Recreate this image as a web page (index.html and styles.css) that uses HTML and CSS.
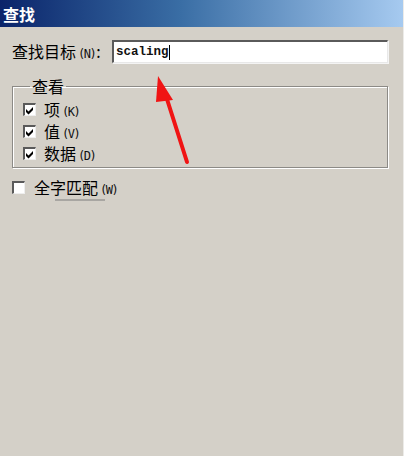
FILE: index.html
```html
<!DOCTYPE html>
<html lang="zh">
<head>
<meta charset="utf-8">
<link rel="stylesheet" href="styles.css">
</head>
<body>
<div class="window">
  <div class="titlebar"><span class="title">查找</span></div>
  <div class="content">
    <div class="find-row">
      <label class="label">查找目标<span class="key">(N)</span>:</label>
      <div class="input"><span class="value">scaling</span><span class="caret"></span></div>
    </div>
    <fieldset class="group">
      <legend class="legend">查看</legend>
      <div class="check-row"><span class="box"><svg class="tick" viewBox="0 0 8 8" width="8" height="8"><path d="M0 3 L2.5 5.5 L7 1 L7 4 L2.5 8.5 L0 6 Z" fill="#000"/></svg></span><span class="text">项<span class="key">(K)</span></span></div>
      <div class="check-row"><span class="box"><svg class="tick" viewBox="0 0 8 8" width="8" height="8"><path d="M0 3 L2.5 5.5 L7 1 L7 4 L2.5 8.5 L0 6 Z" fill="#000"/></svg></span><span class="text">值<span class="key">(V)</span></span></div>
      <div class="check-row"><span class="box"><svg class="tick" viewBox="0 0 8 8" width="8" height="8"><path d="M0 3 L2.5 5.5 L7 1 L7 4 L2.5 8.5 L0 6 Z" fill="#000"/></svg></span><span class="text">数据<span class="key">(D)</span></span></div>
    </fieldset>
    <div class="check-row whole"><span class="box"></span><span class="text focus">全字匹配<span class="key">(W)</span></span></div>
  </div>
  <svg class="arrow" width="404" height="456" viewBox="0 0 404 456">
    <line x1="187" y1="162" x2="166" y2="96" stroke="#f01414" stroke-width="4" stroke-linecap="round"/>
    <polygon points="158,76 173,100 156,102" fill="#f01414"/>
  </svg>
</div>
</body>
</html>
```
FILE: styles.css
```css
html, body {
  margin: 0;
  padding: 0;
}
body {
  background: #d4d0c8;
  font-family: "Noto Sans CJK SC", "Noto Sans", sans-serif;
  color: #000;
}
.window {
  position: relative;
  width: 404px;
  height: 456px;
  overflow: hidden;
  background: #d4d0c8;
  box-sizing: border-box;
  border-right: 1px solid #ecebe8;
}
.titlebar {
  height: 27px;
  display: flex;
  align-items: center;
  padding-left: 3px;
  background: linear-gradient(to right, #0a246a 0%, #3a6ea5 45%, #a6caf0 100%);
}
.title {
  color: #fff;
  font-weight: bold;
  font-size: 16px;
  line-height: 1;
}
.content {
  padding: 13px 15px 0 12px;
}
.find-row {
  display: flex;
  align-items: center;
  height: 23px;
}
.label {
  width: 100px;
  font-size: 16px;
  line-height: 1;
  color: #000;
  white-space: nowrap;
}
.key {
  font-family: "DejaVu Sans Mono", "Liberation Mono", monospace;
  font-size: 12px;
  letter-spacing: -1.5px;
  margin-left: 2px;
  margin-right: 1px;
  color: #111;
}
.input {
  flex: 1;
  height: 23px;
  box-sizing: border-box;
  background: #fff;
  border-top: 2px solid #5a5a5a;
  border-left: 2px solid #5a5a5a;
  border-right: 1px solid #e8e8e8;
  border-bottom: 1px solid #e8e8e8;
  box-shadow: 1px 1px 0 #f4f4f4;
  display: flex;
  align-items: center;
  padding-left: 2px;
}
.value {
  font-family: "Liberation Mono", "DejaVu Sans Mono", monospace;
  font-size: 12.5px;
  font-weight: bold;
  color: #111;
}
.caret {
  width: 1px;
  height: 15px;
  background: #000;
}
.group {
  margin: 15px 0 0 0;
  padding: 4px 0 4px 10px;
  border: 1px solid #8c8a86;
  box-shadow: 1px 1px 0 #fff, inset 1px 1px 0 #fff;
  height: 90px;
  box-sizing: border-box;
  min-width: 0;
}
.legend {
  padding: 0 2px;
  margin-left: 7px;
  font-size: 16px;
  line-height: 16px;
  color: #000;
}
.check-row {
  display: flex;
  align-items: center;
  height: 22px;
  gap: 8px;
}
.box {
  width: 13px;
  height: 13px;
  box-sizing: border-box;
  background: #fff;
  border-top: 2px solid #5a5a5a;
  border-left: 2px solid #5a5a5a;
  border-right: 1px solid #eee;
  border-bottom: 1px solid #eee;
  display: flex;
  align-items: center;
  justify-content: center;
  flex: none;
}
.tick {
  display: block;
  overflow: visible;
}
.text {
  font-size: 16px;
  line-height: 1;
  color: #000;
}
.whole {
  margin-top: 8px;
  gap: 9px;
}
.focus {
  position: relative;
}
.focus::after {
  content: "";
  position: absolute;
  left: 21px;
  width: 50px;
  bottom: -5px;
  height: 2px;
  background: #a8a6a2;
}
.arrow {
  position: absolute;
  left: 0;
  top: 0;
  pointer-events: none;
}
```
